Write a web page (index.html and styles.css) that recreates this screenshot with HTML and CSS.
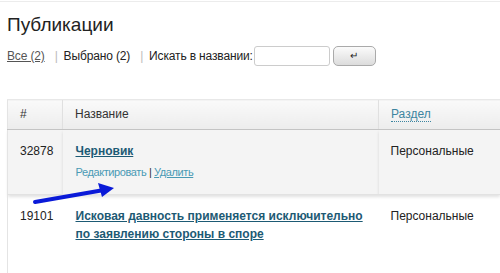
FILE: index.html
```html
<!DOCTYPE html>
<html lang="ru">
<head>
    <meta charset="UTF-8">
    <title>Публикации</title>
    <link rel="stylesheet" href="styles.css">
</head>
<body>

    <div class="topline"></div>

    <main class="page">

        <h1 class="title">Публикации</h1>

        <div class="filters">
            <a href="#" class="filter-link">Все (2)</a>
            <span class="sep">|</span>
            <span>Выбрано (2)</span>
            <span class="sep">|</span>
            <label for="search">Искать в названии:</label>
            <input type="text" id="search" class="search">
            <button type="button" class="search-btn">&#8629;</button>
        </div>

        <div class="list">
            <table class="posts">
                <colgroup>
                    <col class="col-id">
                    <col class="col-name">
                    <col>
                </colgroup>
                <thead>
                    <tr>
                        <th>#</th>
                        <th>Название</th>
                        <th><a href="#" class="sort">Раздел</a></th>
                    </tr>
                </thead>
                <tbody>
                    <tr class="active">
                        <td>32878</td>
                        <td>
                            <a href="#" class="post-title">Черновик</a>
                            <div class="actions">
                                <a href="#" class="edit">Редактировать</a> | <a href="#" class="delete">Удалить</a>
                            </div>
                        </td>
                        <td>Персональные</td>
                    </tr>
                    <tr class="last">
                        <td>19101</td>
                        <td>
                            <a href="#" class="post-title">Исковая давность применяется исключительно по заявлению стороны в споре</a>
                        </td>
                        <td>Персональные</td>
                    </tr>
                </tbody>
            </table>

            <svg class="arrow" width="90" height="24" viewBox="0 0 90 24">
                <line x1="3" y1="19" x2="72" y2="7" stroke="#0a1ad8" stroke-width="4" stroke-linecap="round"/>
                <polygon points="66,0 82,5 70,14" fill="#0a1ad8"/>
            </svg>
        </div>

    </main>

</body>
</html>
```

FILE: styles.css
```css
body {
    margin: 0;
    font-family: 'Liberation Sans', Arial, sans-serif;
    font-size: 12px;
    color: #222;
    background-color: white;
    overflow: hidden;
}

.topline {
    height: 1px;
    border-bottom: 1px solid #ececec;
}

.page {
    padding-left: 7px;
}

.title {
    margin: 0;
    padding-top: 11px;
    font-size: 19px;
    font-weight: normal;
    line-height: 24px;
    color: #222;
}

.filters {
    display: flex;
    align-items: center;
    margin-top: 8px;
    height: 22px;
    line-height: 18px;
    letter-spacing: -0.15px;
}

.filter-link {
    color: #555;
}

.sep {
    color: #bbb;
    margin: 0 6px 0 10px;
}

.search {
    width: 72px;
    height: 16px;
    margin-left: 1px;
    padding: 1px;
    border: 1px solid #ccc;
    border-radius: 3px;
    font-size: 12px;
}

.search-btn {
    width: 43px;
    height: 20px;
    margin-left: 3px;
    padding: 0;
    font-size: 10px;
    line-height: 18px;
    color: #222;
    border: 1px solid #aaa;
    border-radius: 5px;
    background: linear-gradient(#fbfbfb, #dcdcdc);
}

.list {
    position: relative;
    margin-top: 32px;
}

.posts {
    width: 100%;
    table-layout: fixed;
    border-collapse: collapse;
    border-left: 1px solid #e4e4e4;
    line-height: 18px;
}

.col-id {
    width: 55px;
}

.col-name {
    width: 316px;
}

.posts th {
    padding: 5px 12px 6px;
    text-align: left;
    font-weight: normal;
    color: #333;
    background: linear-gradient(#fafafa, #ececec);
    border-top: 1px solid #e8e8e8;
    border-bottom: 1px solid #c4c4c4;
    box-shadow: 0 2px 2px rgba(0, 0, 0, 0.08);
}

.posts th + th {
    border-left: 1px solid #e0e0e0;
}

.sort {
    color: #3d85a0;
    text-decoration: none;
    border-bottom: 1px dotted #3d85a0;
}

.posts td {
    padding: 12px 12px 12px 13px;
    vertical-align: top;
}

.posts td:first-child,
.posts td:last-child {
    padding-left: 12px;
}

.active td {
    padding-bottom: 14px;
    background-color: #f4f4f4;
    border-bottom: 1px solid #e2e2e2;
    box-shadow: 0 2px 3px rgba(0, 0, 0, 0.12);
}

.last td {
    padding-bottom: 40px;
}

.post-title {
    font-weight: bold;
    color: #1d5a74;
}

.actions {
    margin-top: 4px;
    font-size: 11px;
    line-height: 16px;
    letter-spacing: -0.4px;
    color: #333;
}

.edit {
    color: #4a9ab4;
    text-decoration: none;
}

.delete {
    color: #4a9ab4;
}

.arrow {
    position: absolute;
    left: 25px;
    top: 84px;
}
```
